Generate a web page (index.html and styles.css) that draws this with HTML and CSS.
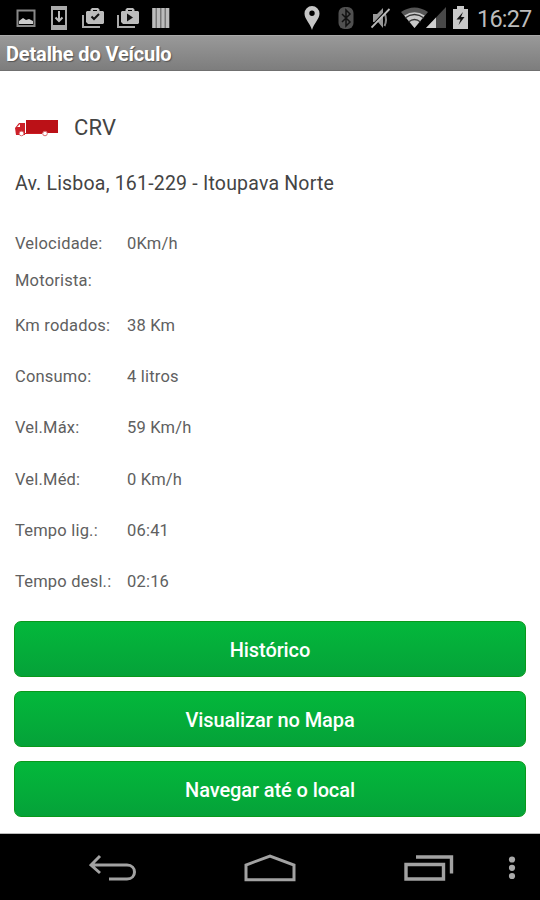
FILE: index.html
```
<!DOCTYPE html>
<html lang="pt-BR">
<head>
<meta charset="utf-8">
<title>Detalhe do Veículo</title>
<link rel="stylesheet" href="styles.css">
</head>
<body>
<div class="status">
  <div class="status-left">
    <svg width="20" height="24" viewBox="0 0 20 24"><path d="M1.5 4.500h17v15.500h-17z" fill="none" stroke="#888" stroke-width="2"/><path d="M3 18v-3l4-3 3 2 3-1 4 2v3z" fill="#ccc"/></svg>
    <svg width="16" height="24" viewBox="0 0 16 24"><path d="M0 0h16v24H0zM2 4v15h12V4z" fill="#aaa" fill-rule="evenodd"/><path d="M8 5v10M4.500 11.500L8 15l3.500-3.500" fill="none" stroke="#bbb" stroke-width="2"/></svg>
    <svg width="23" height="24" viewBox="0 0 23 24"><path d="M1 9v12h17" fill="none" stroke="#aaa" stroke-width="2"/><path d="M8.500 5V3.500L10 2h6l1.500 1.500V5H21l1 1v11l-1 1H6l-2-2V6l1-1zM11 5h4V4h-4z" fill="#bcbcbc"/><path d="M9.500 10.500l2.500 2.500 5-5" fill="none" stroke="#111" stroke-width="2"/></svg>
    <svg width="23" height="24" viewBox="0 0 23 24"><path d="M1 9v12h17" fill="none" stroke="#aaa" stroke-width="2"/><path d="M8.500 5V3.500L10 2h6l1.500 1.500V5H21l1 1v11l-1 1H6l-2-2V6l1-1zM11 5h4V4h-4z" fill="#bcbcbc"/><path d="M10 7.500v8l6-4z" fill="#111"/></svg>
    <svg width="18" height="24" viewBox="0 0 18 24"><path d="M0 2h17.500v20H0z" fill="#777"/><path d="M2 2v20M6.500 2v20M11 2v20M15.500 2v20" stroke="#bcbcbc" stroke-width="3"/></svg>
  </div>
  <div class="status-right">
    <svg width="16" height="24" viewBox="0 0 16 24"><path d="M8 0a7.500 7.500 0 0 1 7.500 7.500C15.500 13 10 17 8 24 6 17 .5 13 .5 7.500A7.500 7.500 0 0 1 8 0zm0 4.500a2.700 2.700 0 1 0 0 5.400 2.700 2.700 0 0 0 0-5.400z" fill="#c6c6c6"/></svg>
    <svg class="bt" width="16" height="24" viewBox="0 0 16 24"><rect x=".5" y="1" width="15" height="22" rx="6" fill="#505050"/><path d="M4 8l8 8-4 4V4l4 4-8 8" fill="none" stroke="#111" stroke-width="1.500"/></svg>
    <svg class="mute" width="20" height="24" viewBox="0 0 20 24"><path d="M2 8h4l6-6v20l-5-6H2z" fill="#999"/><path d="M13.500 7q3 7 0 13" fill="none" stroke="#888" stroke-width="2"/><path d="M0 20.500L17.500 2" stroke="#000" stroke-width="1.500"/><path d="M.5 21.500L18.500 3" stroke="#bbb" stroke-width="1.800"/></svg>
    <svg class="wifi" width="27" height="24" viewBox="0 0 27 24"><path d="M0 6Q13.500-3 27 6L13.500 22z" fill="#555"/><path d="M3.300 9.600Q13.500 3 23.700 9.600L13.500 22z" fill="#c8c8c8"/><path d="M4 12Q13.500 5 23 12M7.500 16Q13.500 11 19.500 16" fill="none" stroke="#333" stroke-width="1.300"/></svg>
    <svg class="signal" width="20" height="24" viewBox="0 0 20 24"><path d="M0 22L20 1v21z" fill="#484848"/><path d="M0 22L10 11.500V22z" fill="#d0d0d0"/></svg>
    <svg class="battery" width="15" height="24" viewBox="0 0 15 24"><path d="M0 3h4V0h7v3h4v20H0z" fill="#c8c8c8"/><path d="M10 6L3.500 13.500h4l-2 5.500 6-8H8z" fill="#111"/></svg>
    <span class="clock">16:27</span>
  </div>
</div>
<header class="bar"><h1>Detalhe do Veículo</h1></header>
<main>
  <div class="vehicle">
    <svg width="44" height="18" viewBox="0 0 44 18"><path d="M11 1h32v13H11z" fill="#bb1117"/><path d="M0 9l4-5h6v12H1z" fill="#cd2028"/><path d="M2 8l3-3v3z" fill="#fff"/><path d="M10 14h17v1H10z" fill="#cc1b22"/><g fill="#fff" stroke="#d96a6e"><circle cx="6.500" cy="14.500" r="2.300"/><circle cx="30" cy="14.500" r="2.300"/></g></svg>
    <span class="name">CRV</span>
  </div>
  <p class="address">Av. Lisboa, 161-229 - Itoupava Norte</p>
  <dl class="details">
    <dt>Velocidade:</dt><dd>0Km/h</dd>
    <dt>Motorista:</dt><dd></dd>
    <dt>Km rodados:</dt><dd>38 Km</dd>
    <dt>Consumo:</dt><dd>4 litros</dd>
    <dt>Vel.Máx:</dt><dd>59 Km/h</dd>
    <dt>Vel.Méd:</dt><dd>0 Km/h</dd>
    <dt>Tempo lig.:</dt><dd>06:41</dd>
    <dt>Tempo desl.:</dt><dd>02:16</dd>
  </dl>
  <div class="actions">
    <button>Histórico</button>
    <button>Visualizar no Mapa</button>
    <button>Navegar até o local</button>
  </div>
</main>
<nav>
  <svg class="back" width="48" height="30" viewBox="0 0 48 30"><path d="M11 2L2 11l9 8M2 11h36c10 0 10 14 0 14H20" fill="none" stroke="#a2a2a2" stroke-width="3"/></svg>
  <svg class="home" width="52" height="30" viewBox="0 0 52 30"><path d="M2 25.800V11L26 2l24 9v14.800z" fill="none" stroke="#a2a2a2" stroke-width="3"/></svg>
  <svg class="recent" width="50" height="30" viewBox="0 0 50 30"><path d="M2 10.500h37.500v14.500H2zM12 3h35.500v16.500" fill="none" stroke="#a2a2a2" stroke-width="3.400"/></svg>
  <svg class="more" width="8" height="30" viewBox="0 0 8 30"><g fill="#aaa"><circle cx="4" cy="5.500" r="3.100"/><circle cx="4" cy="13.800" r="3.100"/><circle cx="4" cy="22" r="3.100"/></g></svg>
</nav>
</body>
</html>
```
FILE: styles.css
```
* { box-sizing: border-box; }
body {
  margin: 0;
  height: 900px;
  display: flex;
  flex-direction: column;
  background: #fff;
  color: #444;
  font-family: Roboto, "Liberation Sans", sans-serif;
  overflow: hidden;
}
svg { display: block; flex: none; }
.status {
  height: 35px;
  flex: none;
  background: #000;
  display: flex;
  justify-content: space-between;
  align-items: center;
  padding: 1px 8px 0 16px;
}
.status-left { display: flex; gap: 14px; }
.status-left svg:nth-child(2) { margin-left: 1px; }
.status-left svg:nth-child(3) { margin-left: 1px; }
.status-left svg:nth-child(4) { margin-left: -2px; }
.status-left svg:nth-child(5) { margin-left: -2px; }
.status-right { display: flex; align-items: center; }
.bt { margin-left: 18px; }
.mute { margin-left: 17px; }
.wifi { margin-left: 10px; }
.signal { margin-left: -2px; }
.battery { margin-left: 7px; }
.clock {
  width: 55px;
  margin-left: 9px;
  color: #bcbcbc;
  font-size: 23.5px;
  line-height: 30px;
  letter-spacing: -0.8px;
  white-space: nowrap;
  padding-top: 1px;
}
.bar {
  height: 36px;
  flex: none;
  padding: 1px 0 0 6px;
  background: linear-gradient(#999, #7d7d7d);
  border-top: 1px solid #aaa;
  border-bottom: 1px solid #707070;
}
.bar h1 {
  margin: 0;
  color: #fff;
  font-size: 20px;
  line-height: 34px;
  font-weight: 700;
  letter-spacing: -0.15px;
  text-shadow: 1px 1px 1px #555;
}
main {
  flex: 1;
  padding: 41px 14px 0 15px;
  border-bottom: 1px solid #bbb;
}
.vehicle { display: flex; align-items: center; gap: 15px; height: 32px; }
.name { font-size: 22px; line-height: 32px; color: #444; letter-spacing: 0.2px; }
.address {
  margin: 24px 0 0;
  font-size: 19.5px;
  line-height: 32px;
  letter-spacing: 0.2px;
  color: #444;
  white-space: nowrap;
}
.details {
  margin: 25px 0 0;
  display: grid;
  grid-template-columns: 112px 1fr;
  grid-template-rows: 37px 38px repeat(6, 51.3px);
  align-items: center;
  font-size: 16.5px;
  line-height: 22px;
  color: #606060;
}
.details dt, .details dd { margin: 0; letter-spacing: 0.2px; white-space: nowrap; }
.actions { display: grid; gap: 14.3px; margin: 13px 0 0 -1px; }
.actions button {
  height: 56px;
  border: 1px solid #0a991b;
  border-radius: 7px;
  background: linear-gradient(#03b83b, #05a239);
  color: #fff;
  font: 500 20px/54px Roboto, "Liberation Sans", sans-serif;
  letter-spacing: -0.1px;
  padding: 1px 0 0;
}
nav {
  height: 66px;
  flex: none;
  background: #000;
  display: flex;
  align-items: center;
  padding: 4px 0 0 89px;
}
.home { margin-left: 107px; }
.recent { margin-left: 108px; }
.more { margin-left: 54px; }
```
